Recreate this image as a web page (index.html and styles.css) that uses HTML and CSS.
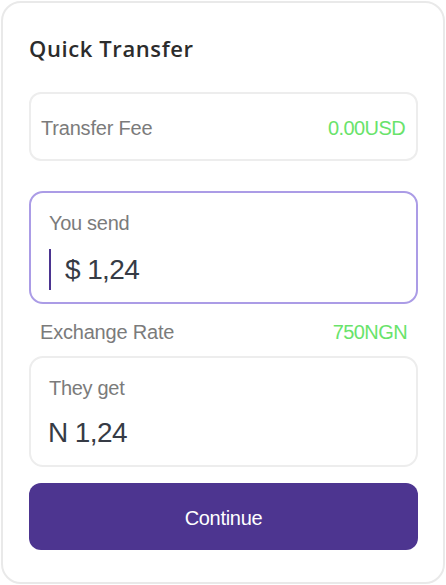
FILE: index.html
```html
<!DOCTYPE html>
<html>
<head>
<meta charset="utf-8">
<link rel="stylesheet" href="styles.css">
</head>
<body>
<div class="card">
  <h1 class="title">Quick Transfer</h1>
  <div class="fee-box">
    <span class="muted">Transfer Fee</span>
    <span class="green">0.00USD</span>
  </div>
  <div class="field field-active">
    <div class="label">You send</div>
    <div class="amount-row">
      <span class="cursor"></span>
      <span class="amount">$ 1,24</span>
    </div>
  </div>
  <div class="rate-row">
    <span class="muted">Exchange Rate</span>
    <span class="green">750NGN</span>
  </div>
  <div class="field field-get">
    <div class="label">They get</div>
    <div class="amount-row">
      <span class="amount">N 1,24</span>
    </div>
  </div>
  <button class="btn">Continue</button>
</div>
</body>
</html>
```
FILE: styles.css
```css
* { box-sizing: border-box; }
html, body { margin: 0; padding: 0; background: #fff; }
body { font-family: "Liberation Sans", Arial, sans-serif; }
.card {
  margin: 1px;
  height: 583px;
  border: 2px solid #e9e9e9;
  border-radius: 20px;
  padding: 0 25px 0 26px;
  display: flex;
  flex-direction: column;
}
.title {
  margin: 31px 0 0 0;
  height: 28px;
  line-height: 28px;
  font-family: "Open Sans", sans-serif;
  font-weight: 600;
  font-size: 22px;
  color: #2c2c2c;
  letter-spacing: 0.6px;
}
.fee-box {
  margin-top: 30px;
  height: 69px;
  border: 2px solid #ededed;
  border-radius: 12px;
  padding: 3px 11px 0 10px;
  display: flex;
  align-items: center;
  justify-content: space-between;
}
.muted {
  color: #7b7b7b;
  font-size: 20px;
  letter-spacing: -0.2px;
}
.green {
  color: #69e36b;
  font-size: 20px;
  letter-spacing: -0.6px;
}
.field {
  border: 2px solid #ededed;
  border-radius: 14px;
  padding: 0 16px 0 18px;
  display: flex;
  flex-direction: column;
}
.field-active {
  margin-top: 30px;
  height: 113px;
  border-color: #ab9ce6;
}
.label {
  margin-top: 18px;
  height: 24px;
  line-height: 24px;
  font-size: 20px;
  color: #7b7b7b;
  letter-spacing: -0.3px;
}
.amount-row {
  display: flex;
  align-items: center;
  gap: 14px;
}
.field-active .amount-row { margin-top: 14px; }
.cursor {
  width: 2px;
  height: 41px;
  background: #4b3490;
}
.amount {
  font-size: 28px;
  color: #363b45;
  letter-spacing: -0.6px;
  line-height: 41px;
}
.field-get .amount { margin-left: -1px; }
.rate-row {
  height: 52px;
  display: flex;
  align-items: center;
  justify-content: space-between;
  padding: 5px 11px 0 11px;
}
.field-get {
  height: 111px;
}
.field-get .amount-row { margin-top: 12px; }
.btn {
  margin-top: 16px;
  height: 67px;
  border: none;
  border-radius: 12px;
  background: #4d3590;
  color: #fff;
  font-family: "Liberation Sans", Arial, sans-serif;
  font-size: 20px;
  letter-spacing: -0.3px;
  padding: 4px 0 0 0;
  width: 100%;
}
```
